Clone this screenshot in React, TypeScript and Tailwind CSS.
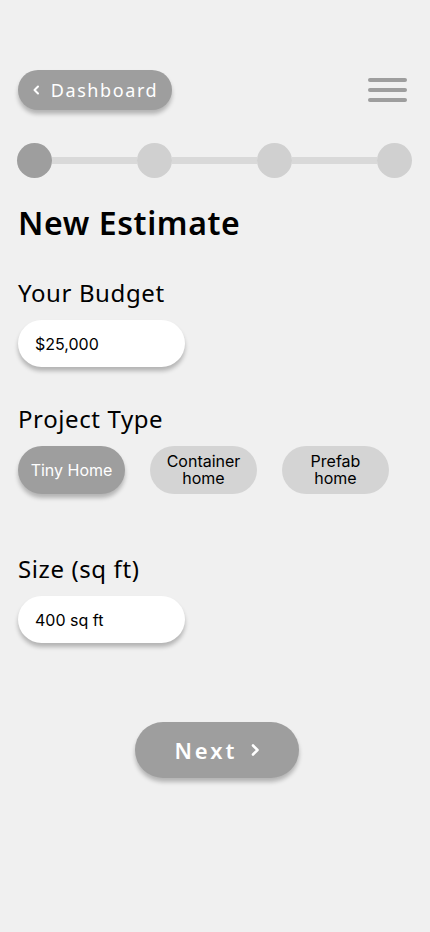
import { useState } from 'react';

const heading = { fontFamily: '"Noto Sans", Inter, sans-serif' };

export default function App() {
    const [type, setType] = useState<'tiny' | 'container' | 'prefab'>('tiny');

    const chip = (active: boolean) =>
        `w-[107px] h-[48px] rounded-full flex flex-col items-center justify-center text-center text-[16px] leading-[17px] ${active
            ? 'bg-[#9e9e9e] text-white shadow-[0_4px_4px_rgba(0,0,0,0.25)]'
            : 'bg-[#d4d4d4] text-black'
        }`;

    return (
        <div className="min-h-[932px] w-[430px] bg-[#f0f0f0] px-[18px] pt-[70px]" style={{ fontFamily: 'Inter, "Noto Sans", sans-serif' }}>
            {/* Top bar */}
            <div className="flex items-center justify-between">
                <button
                    className="h-[40px] w-[154px] rounded-full bg-[#9e9e9e] text-white flex items-center justify-center gap-[10px] shadow-[0_4px_4px_rgba(0,0,0,0.25)] text-[18px] tracking-[1.6px]"
                    style={heading}
                >
                    <svg className="w-[9px] h-[10px]" viewBox="0 0 9 10" fill="none" stroke="currentColor" strokeWidth={2} strokeLinecap="round" strokeLinejoin="round">
                        <path d="M6 1.5 2.5 5 6 8.5" />
                    </svg>
                    <span>Dashboard</span>
                </button>
                <div className="flex flex-col gap-[6px] w-[39px] mr-[5px]">
                    <div className="h-[4px] rounded-full bg-[#9e9e9e]" />
                    <div className="h-[4px] rounded-full bg-[#9e9e9e]" />
                    <div className="h-[4px] rounded-full bg-[#9e9e9e]" />
                </div>
            </div>

            {/* Stepper */}
            <div className="mt-[33px] -ml-[1px] flex items-center">
                <div className="w-[35px] h-[35px] rounded-full bg-[#9e9e9e] shrink-0" />
                <div className="flex-1 h-[7px] bg-[#d9d9d9]" />
                <div className="w-[35px] h-[35px] rounded-full bg-[#d0d0d0] shrink-0" />
                <div className="flex-1 h-[7px] bg-[#d9d9d9]" />
                <div className="w-[35px] h-[35px] rounded-full bg-[#d0d0d0] shrink-0" />
                <div className="flex-1 h-[7px] bg-[#d9d9d9]" />
                <div className="w-[35px] h-[35px] rounded-full bg-[#d0d0d0] shrink-0" />
            </div>

            <h1 className="mt-[25px] text-[32px] leading-[40px] font-semibold tracking-[0.6px] text-black" style={heading}>New Estimate</h1>

            {/* Budget */}
            <h2 className="mt-[35px] text-[24px] leading-[30px] tracking-[0.6px] text-black" style={heading}>Your Budget</h2>
            <div className="mt-[12px] w-[167px] h-[47px] rounded-full bg-white shadow-[0_4px_4px_rgba(0,0,0,0.25)] flex items-center pl-[17px] text-[16px] text-black">
                $25,000
            </div>

            {/* Project type */}
            <h2 className="mt-[37px] text-[24px] leading-[30px] tracking-[0.6px] text-black" style={heading}>Project Type</h2>
            <div className="mt-[12px] flex gap-[25px]">
                <button onClick={() => setType('tiny')} className={chip(type === 'tiny')}>Tiny Home</button>
                <button onClick={() => setType('container')} className={chip(type === 'container')}>
                    <span className="block">Container</span>
                    <span className="block">home</span>
                </button>
                <button onClick={() => setType('prefab')} className={chip(type === 'prefab')}>
                    <span className="block">Prefab</span>
                    <span className="block">home</span>
                </button>
            </div>

            {/* Size */}
            <h2 className="mt-[60px] text-[24px] leading-[30px] tracking-[0.6px] text-black" style={heading}>Size (sq ft)</h2>
            <div className="mt-[12px] w-[167px] h-[47px] rounded-full bg-white shadow-[0_4px_4px_rgba(0,0,0,0.25)] flex items-center pl-[17px] text-[16px] text-black">
                400 sq ft
            </div>

            {/* Next */}
            <div className="mt-[79px] flex justify-center pl-[4px]">
                <button
                    className="w-[164px] h-[56px] rounded-full bg-[#9e9e9e] text-white flex items-center justify-center gap-[12px] shadow-[0_4px_4px_rgba(0,0,0,0.25)] text-[22px] font-semibold tracking-[3px]"
                    style={heading}
                >
                    <span>Next</span>
                    <svg className="w-[10px] h-[14px]" viewBox="0 0 10 14" fill="none" stroke="currentColor" strokeWidth={2.6} strokeLinecap="round" strokeLinejoin="round">
                        <path d="M3 2.5 7.5 7 3 11.5" />
                    </svg>
                </button>
            </div>
        </div>
    );
}
